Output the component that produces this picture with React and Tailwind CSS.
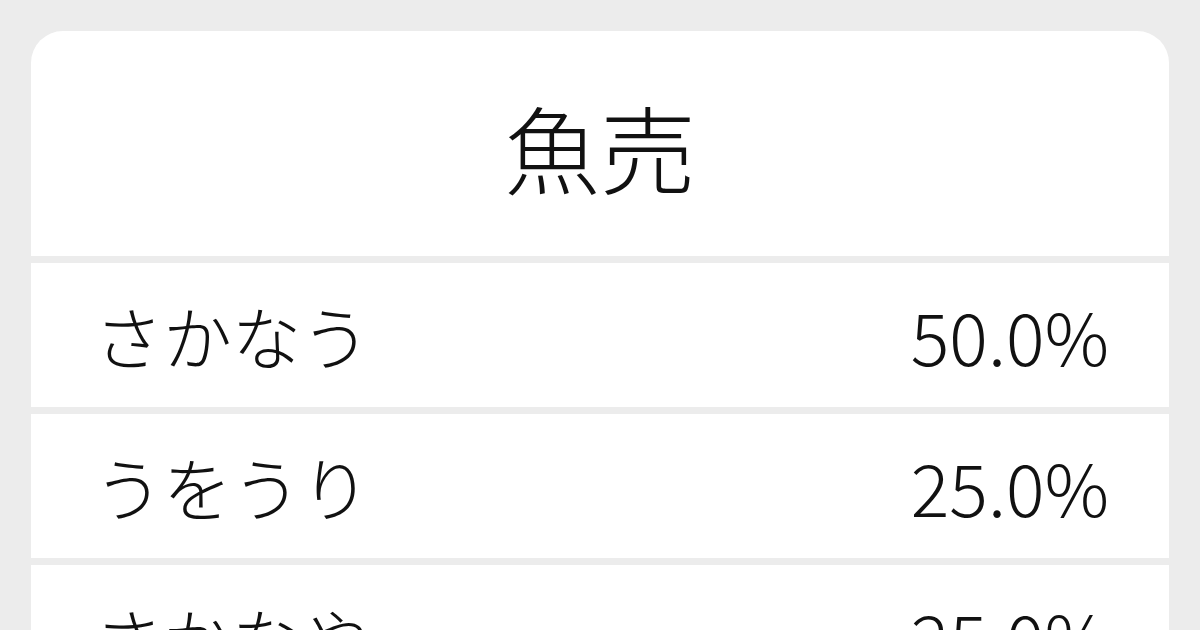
export default function App() {
  const rows = [
    ["さかなう", "50.0%"],
    ["うをうり", "25.0%"],
    ["さかなや", "25.0%"],
  ];
  const font = { fontFamily: '"Noto Sans CJK JP", "Noto Sans", sans-serif' };
  return (
    <div className="w-[1200px] h-[630px] overflow-hidden bg-[#ececec] px-[31px] pt-[31px]" style={font}>
      <div className="flex flex-col gap-[7px] rounded-t-[32px] overflow-hidden">
        <div className="h-[225px] bg-white flex items-center justify-center pt-[4px]">
          <span className="text-[96px] leading-none font-light text-[#111]">魚売</span>
        </div>
        {rows.map(([k, v]) => (
          <div key={k} className="h-[144px] shrink-0 bg-white flex items-center justify-between pl-[63px] pr-[60px]">
            <span className="text-[69px] leading-none font-light text-[#111]">{k}</span>
            <span className="text-[72px] leading-none font-light text-[#111]">{v}</span>
          </div>
        ))}
      </div>
    </div>
  );
}
